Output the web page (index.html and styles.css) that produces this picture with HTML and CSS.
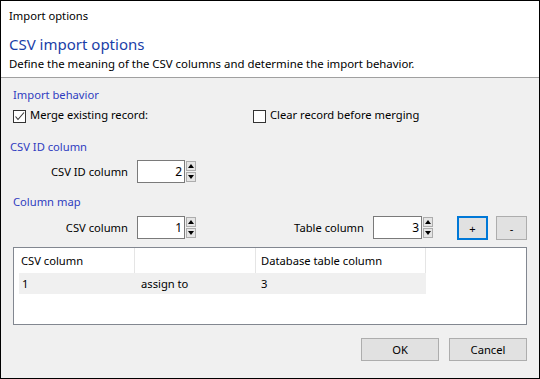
FILE: index.html
```html
<!DOCTYPE html>
<html>
<head>
<meta charset="utf-8">
<link rel="stylesheet" href="styles.css">
</head>
<body>
<div class="window">
  <div class="header">
    <div class="wtitle">Import options</div>
    <div class="main-title">CSV import options</div>
    <div class="desc">Define the meaning of the CSV columns and determine the import behavior.</div>
  </div>
  <div class="body">
    <div class="group-label gl1">Import behavior</div>
    <div class="check-row">
      <div class="check c1"><span class="box"><svg width="11" height="11" viewBox="0 0 11 11"><polyline points="1.5,5.5 4,8.5 10,1.5" fill="none" stroke="#333" stroke-width="1.1"/></svg></span><span>Merge existing record:</span></div>
      <div class="check c2"><span class="box"></span><span>Clear record before merging</span></div>
    </div>
    <div class="group-label gl2">CSV ID column</div>
    <div class="field-row">
      <span class="flabel">CSV ID column</span>
      <div class="spin-input">2</div>
      <div class="spin-btns"><span class="sb"><span class="tri-up"></span></span><span class="sb"><span class="tri-down"></span></span></div>
    </div>
    <div class="group-label gl3">Column map</div>
    <div class="field-row map-row">
      <span class="flabel">CSV column</span>
      <div class="spin-input">1</div>
      <div class="spin-btns"><span class="sb"><span class="tri-up"></span></span><span class="sb"><span class="tri-down"></span></span></div>
      <span class="flabel flabel2">Table column</span>
      <div class="spin-input wide">3</div>
      <div class="spin-btns"><span class="sb"><span class="tri-up"></span></span><span class="sb"><span class="tri-down"></span></span></div>
      <div class="btn small focus">+</div>
      <div class="btn small minus">-</div>
    </div>
    <div class="list">
      <div class="list-head">
        <div class="hcell h1">CSV column</div>
        <div class="hcell h2"></div>
        <div class="hcell h3">Database table column</div>
      </div>
      <div class="list-row">
        <div class="rcell r1">1</div>
        <div class="rcell r2">assign to</div>
        <div class="rcell r3">3</div>
      </div>
    </div>
    <div class="footer">
      <div class="btn wide-btn">OK</div>
      <div class="btn wide-btn">Cancel</div>
    </div>
  </div>
</div>
</body>
</html>
```
FILE: styles.css
```css
body {
  margin: 0;
  font-family: "Noto Sans", "DejaVu Sans", sans-serif;
  font-size: 11.2px;
  color: #000;
}
.window {
  width: 540px;
  height: 379px;
  box-sizing: border-box;
  border: 1px solid #000;
  background: #f0f0f0;
  display: flex;
  flex-direction: column;
}
.header {
  height: 77px;
  box-sizing: border-box;
  background: #fff;
  border-bottom: 1px solid #a0a0a0;
  padding: 7px 0 0 8px;
}
.wtitle {
  line-height: 16px;
}
.main-title {
  font-size: 15px;
  line-height: 20px;
  color: #1a3ea8;
  margin-top: 10px;
}
.desc {
  line-height: 16px;
  margin-top: 2px;
  font-size: 11.4px;
}
.body {
  flex: 1;
  padding: 0 12px;
  display: flex;
  flex-direction: column;
}
.group-label {
  line-height: 16px;
  color: #2f3cc0;
}
.gl1 { margin-top: 9px; }
.gl2 { margin-top: 16px; margin-left: -3px; }
.gl3 { margin-top: 11px; }
.check-row {
  display: flex;
  margin-top: 4px;
  height: 16px;
  line-height: 16px;
}
.check {
  display: flex;
  align-items: flex-start;
}
.c1 { width: 240px; }
.box {
  width: 13px;
  height: 13px;
  box-sizing: border-box;
  border: 1px solid #333;
  background: #fff;
  margin-top: 3px;
  margin-right: 4px;
  display: flex;
  align-items: center;
  justify-content: center;
}
.box svg { display: block; }
.field-row {
  display: flex;
  align-items: center;
  height: 23px;
  margin-top: 5px;
}
.map-row {
  margin-top: 6px;
  height: 24px;
}
.flabel {
  width: 115px;
  text-align: right;
  line-height: 16px;
  margin-right: 9px;
}
.flabel2 {
  width: 90px;
  margin-left: 78px;
}
.spin-input {
  width: 48px;
  height: 23px;
  box-sizing: border-box;
  border: 1px solid #7a7a7a;
  background: #fff;
  text-align: right;
  padding-right: 2px;
  line-height: 21px;
  font-size: 12px;
  align-self: flex-start;
}
.spin-input.wide { width: 49px; }
.spin-btns {
  display: flex;
  flex-direction: column;
  gap: 1px;
  margin-left: 1px;
  align-self: flex-start;
  margin-top: 1px;
}
.sb {
  width: 10px;
  height: 10px;
  box-sizing: border-box;
  border: 1px solid #adadad;
  background: #e5e5e5;
  display: flex;
  align-items: center;
  justify-content: center;
}
.tri-up {
  width: 0;
  height: 0;
  border-left: 3px solid transparent;
  border-right: 3px solid transparent;
  border-bottom: 4px solid #000;
}
.tri-down {
  width: 0;
  height: 0;
  border-left: 3px solid transparent;
  border-right: 3px solid transparent;
  border-top: 4px solid #000;
}
.btn {
  box-sizing: border-box;
  border: 1px solid #adadad;
  background: #e1e1e1;
  display: flex;
  align-items: center;
  justify-content: center;
}
.btn.small {
  width: 31px;
  height: 24px;
  align-self: flex-start;
}
.btn.focus {
  border: 2px solid #0078d7;
  margin-left: 24px;
}
.btn.minus { margin-left: 8px; }
.list {
  margin-top: 7px;
  height: 78px;
  box-sizing: border-box;
  border: 1px solid #828790;
  background: #fff;
}
.list-head {
  display: flex;
  height: 25px;
  line-height: 25px;
}
.hcell {
  box-sizing: border-box;
  border-right: 1px solid #e5e5e5;
  white-space: nowrap;
}
.h1 { width: 121px; padding-left: 7px; }
.h2 { width: 121px; }
.h3 { width: 170px; padding-left: 5px; }
.list-row {
  display: flex;
  margin-left: 5px;
  width: 407px;
  height: 21px;
  line-height: 21px;
  background: #f0f0f0;
}
.rcell { box-sizing: border-box; white-space: nowrap; }
.r1 { width: 116px; padding-left: 3px; }
.r2 { width: 121px; padding-left: 6px; }
.r3 { width: 170px; padding-left: 5px; }
.footer {
  display: flex;
  justify-content: flex-end;
  gap: 10px;
  margin-top: 13px;
}
.wide-btn {
  width: 78px;
  height: 23px;
}
```
